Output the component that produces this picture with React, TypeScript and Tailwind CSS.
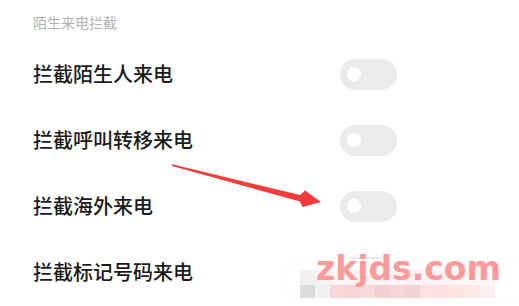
const rows = ['拦截陌生人来电', '拦截呼叫转移来电', '拦截海外来电', '拦截标记号码来电'];

const mosaicTop = ['#f0f0f0', '#f4f4f4', '#fff5f5', '#fff3f3', '#fff4f4', '#fff2f2', '#fff4f4', '#fff1f1', '#fff5f5', '#fff4f4', '#fff6f6', '#fff5f5', '#fff7f7'];
const mosaicBottom = ['#dcdcdc', '#f1f1f1', '#f7d7da', '#f5d5d8', '#f5d9db', '#f2d0d2', '#f5d5d5', '#f0d2d2', '#fde0e0', '#fde0e0', '#fde4e4', '#fde8e8', '#fff0f0'];

function Toggle() {
  return (
    <div className="flex h-[31px] w-[57px] items-center rounded-full bg-[#ebebeb] pl-[7px]">
      <div className="h-[14px] w-[14px] rounded-full bg-white" />
    </div>
  );
}

export default function App() {
  return (
    <div
      className="relative h-[306px] w-[519px] overflow-hidden bg-white px-[33px]"
      style={{ fontFamily: '"Noto Sans CJK SC", "Noto Sans", sans-serif' }}
    >
      <div className="pt-[13px] text-[14px] leading-[18px] text-[#b3b3b3]">陌生来电拦截</div>

      <div className="mt-[10px] flex flex-col">
        {rows.map((label) => (
          <div key={label} className="flex h-[66px] items-center">
            <div className="w-[307px] text-[20px] font-medium leading-none text-[#1a1a1a]">{label}</div>
            <Toggle />
          </div>
        ))}
      </div>

      {/* red arrow */}
      <svg className="pointer-events-none absolute left-0 top-0" width="519" height="306">
        <polygon
          points="172,164.3 300,195 305,190.5 321,202 302.5,207 300,201.5 172,166"
          fill="#f23b3b"
        />
      </svg>

      {/* watermark */}
      <div className="absolute left-[285px] top-[259px] h-[42px] w-[234px] rounded-l-full bg-white shadow-[0_0_2px_rgba(0,0,0,0.04)]" />
      <div className="absolute left-[300px] top-[270px] grid grid-cols-[repeat(13,15px)] grid-rows-[15px_13px]">
        {mosaicTop.map((c, i) => (
          <div key={'t' + i} style={{ backgroundColor: c }} />
        ))}
        {mosaicBottom.map((c, i) => (
          <div key={'b' + i} style={{ backgroundColor: c }} />
        ))}
      </div>
      <div
        className="absolute left-[316px] top-[247px] text-[33px] font-bold leading-[44px] text-[#ff9a9a]"
        style={{ fontFamily: '"DejaVu Sans", sans-serif' }}
      >
        zkjds.com
      </div>
    </div>
  );
}
